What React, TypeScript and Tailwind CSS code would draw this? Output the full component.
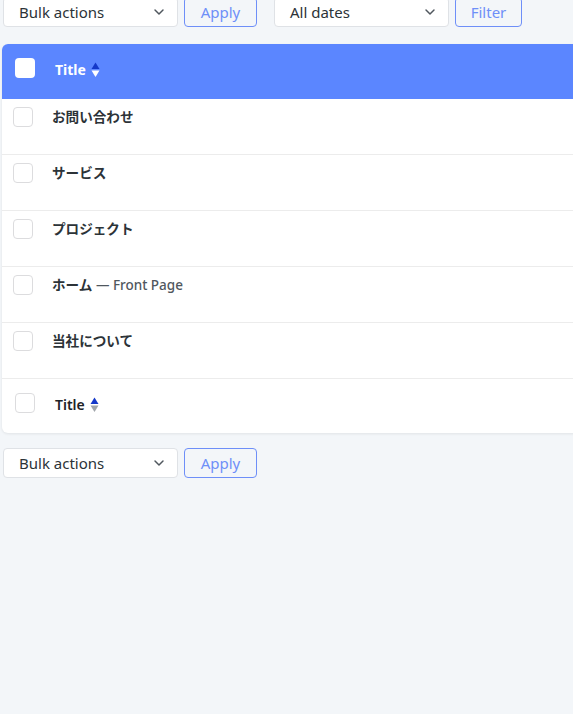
import { ChevronDown } from 'lucide-react';

const font = { fontFamily: '"Noto Sans", "Noto Sans CJK JP", sans-serif' };

const rows = [
  { title: 'お問い合わせ' },
  { title: 'サービス' },
  { title: 'プロジェクト' },
  { title: 'ホーム', state: 'Front Page' },
  { title: '当社について' },
];

const Select = ({ label }: { label: string }) => (
  <div className="flex h-[30px] w-[175px] items-center justify-between rounded-[4px] border border-[#dfe2e6] bg-white pl-[15px] pr-[10px] text-[15px] text-[#2c3338]">
    <span className="mt-[1px]">{label}</span>
    <ChevronDown size={16} strokeWidth={2.2} className="text-[#50575e]" />
  </div>
);

const Button = ({ label, w }: { label: string; w: string }) => (
  <button className={`flex h-[30px] ${w} items-center justify-center rounded-[4px] border border-[#6e8ff8] text-[15px] text-[#6e8ff8]`}>
    <span className="mt-[1px]">{label}</span>
  </button>
);

const SortArrows = ({ down }: { down: string }) => (
  <svg width="9" height="16" viewBox="0 0 9 16" className="ml-[5px]">
    <path d="M4.5 0.5 L8.5 7 L0.5 7 Z" fill="#1438c8" />
    <path d="M0.5 8.5 L8.5 8.5 L4.5 15 Z" fill={down} />
  </svg>
);

const Checkbox = ({ header }: { header?: boolean }) => (
  <div
    className={`h-[20px] w-[20px] shrink-0 rounded-[4px] ${
      header ? 'bg-white' : 'border border-[#dcdcde] bg-white'
    }`}
  />
);

export default function App() {
  return (
    <div className="min-h-[714px] w-[573px] overflow-hidden bg-[#f3f6f9]" style={font}>
      <div className="-mt-[3px] flex items-center pl-[3px]">
        <Select label="Bulk actions" />
        <div className="ml-[6px]">
          <Button label="Apply" w="w-[73px]" />
        </div>
        <div className="ml-[17px]">
          <Select label="All dates" />
        </div>
        <div className="ml-[6px]">
          <Button label="Filter" w="w-[67px]" />
        </div>
      </div>

      <div className="ml-[2px] mt-[17px] w-[600px] overflow-hidden rounded-[6px] bg-white shadow-[0_1px_3px_rgba(0,0,0,0.08)]">
        <div className="flex h-[55px] items-start bg-[#5b86ff] pl-[13px] pt-[14px]">
          <Checkbox header />
          <div className="ml-[20px] mt-[1px] flex items-center text-[14px] font-bold text-white">
            Title
            <SortArrows down="#ffffff" />
          </div>
        </div>
        {rows.map((r) => (
          <div key={r.title} className="flex h-[56px] items-start border-b border-[#ececec] pl-[11px] pt-[8px]">
            <Checkbox />
            <div className="ml-[19px] text-[13.6px] font-bold text-[#2c3338]">
              {r.title}
              {r.state && (
                <span className="text-[13.5px] font-medium text-[#50575e]"> — {r.state}</span>
              )}
            </div>
          </div>
        ))}
        <div className="flex h-[54px] items-start pl-[13px] pt-[14px]">
          <Checkbox />
          <div className="ml-[20px] mt-[1px] flex items-center text-[14px] font-semibold text-[#1d2327]">
            Title
            <SortArrows down="#a0a5aa" />
          </div>
        </div>
      </div>

      <div className="mt-[15px] flex items-center pl-[3px]">
        <Select label="Bulk actions" />
        <div className="ml-[6px]">
          <Button label="Apply" w="w-[73px]" />
        </div>
      </div>
    </div>
  );
}
